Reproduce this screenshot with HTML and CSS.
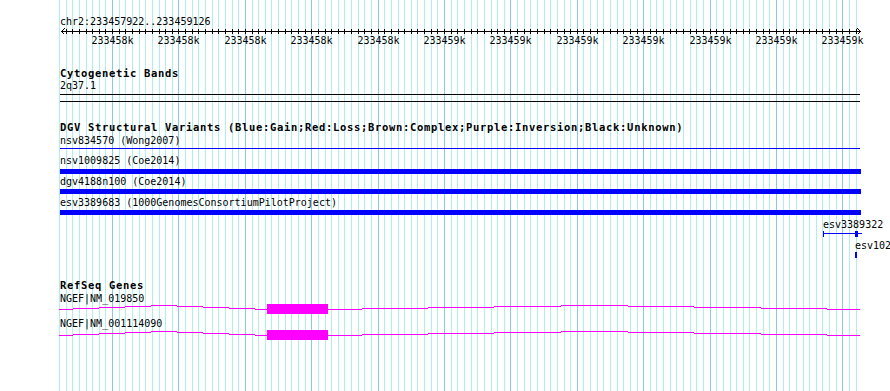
FILE: index.html
```html
<!DOCTYPE html>
<html lang="en">
<head>
<meta charset="UTF-8" />
<title>chr2:233457922..233459126</title>
<link rel="stylesheet" href="styles.css">
</head>
<body>

<div class="panel">
  <svg class="grid" id="grid" width="890" height="391"></svg>

  <div class="tracks">
    <div class="locus">chr2:233457922..233459126</div>
    <svg class="ruler" id="ruler" width="890" height="20">
      <rect x="61" y="3" width="800" height="1" />
      <path d="M64.5 0.5 L61.5 3.5 L64.5 6.5 M857.5 0.5 L860.5 3.5 L857.5 6.5" fill="none" stroke="#000" />
    </svg>

    <section class="track cyto">
      <h2 class="track-title">Cytogenetic Bands</h2>
      <div class="feat-label">2q37.1</div>
      <div class="band"></div>
    </section>

    <section class="track dgv">
      <h2 class="track-title">DGV Structural Variants (Blue:Gain;Red:Loss;Brown:Complex;Purple:Inversion;Black:Unknown)</h2>
      <div class="feat-label mt1">nsv834570 (Wong2007)</div>
      <div class="sv-line"></div>
      <div class="feat-label mt6">nsv1009825 (Coe2014)</div>
      <div class="sv-bar mt3"></div>
      <div class="feat-label mt2">dgv4188n100 (Coe2014)</div>
      <div class="sv-bar mt2"></div>
      <div class="feat-label mt3">esv3389683 (1000GenomesConsortiumPilotProject)</div>
      <div class="sv-bar mt2"></div>
      <div class="feat-label far mt4">esv3389322</div>
      <svg class="sv-mini" width="890" height="6">
        <rect x="823" y="0" width="1" height="6" />
        <rect x="823" y="2" width="39" height="1" />
        <rect x="855" y="0" width="3" height="6" />
      </svg>
      <div class="feat-label farther mt3">esv102</div>
      <div class="sv-tiny"></div>
    </section>

    <section class="track refseq">
      <h2 class="track-title">RefSeq Genes</h2>
      <div class="feat-label mt1">NGEF|NM_019850</div>
      <svg class="gene" width="890" height="10">
        <path d="M59 5.5 H73 M73 4.5 H99 M99 3.5 H125 M125 2.5 H151 M151 1.5 H177 M177 2.5 H203 M203 3.5 H229 M229 4.5 H255 M255 5.5 H267" />
        <path d="M328 5.5 H362 M362 4.5 H428 M428 3.5 H494 M494 2.5 H561 M561 1.5 H628 M628 2.5 H694 M694 3.5 H761 M761 4.5 H827 M827 5.5 H860" />
        <rect x="267" y="0" width="61" height="10" />
      </svg>
      <div class="feat-label mt4">NGEF|NM_001114090</div>
      <svg class="gene mt1" width="890" height="10">
        <path d="M59 5.5 H73 M73 4.5 H99 M99 3.5 H125 M125 2.5 H151 M151 1.5 H177 M177 2.5 H203 M203 3.5 H229 M229 4.5 H255 M255 5.5 H267" />
        <path d="M328 5.5 H362 M362 4.5 H428 M428 3.5 H494 M494 2.5 H561 M561 1.5 H628 M628 2.5 H694 M694 3.5 H761 M761 4.5 H827 M827 5.5 H860" />
        <rect x="267" y="0" width="61" height="10" />
      </svg>
    </section>
  </div>
</div>

<script>
const NS = 'http://www.w3.org/2000/svg';
const start = 233457922;
const end = 233459126;
const scale = 800 / (end - start + 1);

const grid = document.getElementById('grid');
const ruler = document.getElementById('ruler');

function toX(pos) {
  return Math.round(60.3 + (pos - start) * scale);
}

function addRect(svg, x, y, w, h, cls) {
  const r = document.createElementNS(NS, 'rect');
  r.setAttribute('x', x);
  r.setAttribute('y', y);
  r.setAttribute('width', w);
  r.setAttribute('height', h);
  if (cls) r.setAttribute('class', cls);
  svg.appendChild(r);
}

// grid lines every 10bp, darker every 100bp
for (let pos = 233457920; pos <= 233459120; pos += 10) {
  addRect(grid, toX(pos), 0, 1, 391, pos % 100 === 0 ? 'major' : 'minor');
}

// ruler ticks
for (let pos = 233457930; pos <= 233459120; pos += 10) {
  addRect(ruler, toX(pos), 1, 1, 5);
}

// ruler labels
for (let pos = 233458000; pos <= 233459100; pos += 100) {
  const t = document.createElementNS(NS, 'text');
  t.setAttribute('x', toX(pos) + 0.5);
  t.setAttribute('y', 16);
  t.setAttribute('class', 'ruler-label');
  t.textContent = Math.round(pos / 1000) + 'k';
  ruler.appendChild(t);
}
</script>

</body>
</html>
```

FILE: styles.css
```css
body {
  margin: 0;
  background: #fff;
}
.panel {
  position: relative;
  width: 890px;
  height: 391px;
  overflow: hidden;
  padding-top: 16px;
  box-sizing: border-box;
  font-family: "DejaVu Sans Mono", "Liberation Mono", monospace;
  font-size: 10px;
  color: #000;
}
svg {
  display: block;
  shape-rendering: crispEdges;
}
.grid {
  position: absolute;
  top: 0;
  left: 0;
}
.grid .minor {
  fill: #afeeee;
}
.grid .major {
  fill: #87c8f0;
}
.tracks {
  position: relative;
}
.locus {
  padding-left: 60px;
  height: 12px;
  line-height: 12px;
}
.ruler-label {
  font-family: "DejaVu Sans Mono", monospace;
  font-size: 10px;
  text-anchor: middle;
}
.track-title {
  margin: 0;
  padding-left: 60px;
  height: 13px;
  line-height: 13px;
  font-size: 10.5px;
  font-weight: bold;
  letter-spacing: 0.68px;
  white-space: nowrap;
}
.feat-label {
  padding-left: 60px;
  height: 11px;
  line-height: 11px;
  white-space: nowrap;
}
.feat-label.far {
  padding-left: 823px;
}
.feat-label.farther {
  padding-left: 855px;
}
.mt1 { margin-top: 1px; }
.mt2 { margin-top: 2px; }
.mt3 { margin-top: 3px; }
.mt4 { margin-top: 4px; }
.mt6 { margin-top: 6px; }

.cyto {
  margin-top: 19px;
}
.band {
  margin: 3px 0 0 60px;
  width: 800px;
  height: 8px;
  box-sizing: border-box;
  border-top: 1px solid #000;
  border-bottom: 1px solid #000;
}

.dgv {
  margin-top: 19px;
}
.sv-line {
  margin: 2px 0 0 60px;
  width: 800px;
  height: 1px;
  background: #0000ff;
}
.sv-bar {
  margin-left: 60px;
  width: 801px;
  height: 5px;
  background: #0000ff;
}
.sv-mini {
  margin-top: 1px;
  fill: #0000ff;
}
.sv-tiny {
  margin: 1px 0 0 855px;
  width: 2px;
  height: 6px;
  background: #0000ff;
}

.refseq {
  margin-top: 21px;
}
.gene path {
  fill: none;
  stroke: #ff00ff;
  stroke-width: 1;
}
.gene rect {
  fill: #ff00ff;
}
```
